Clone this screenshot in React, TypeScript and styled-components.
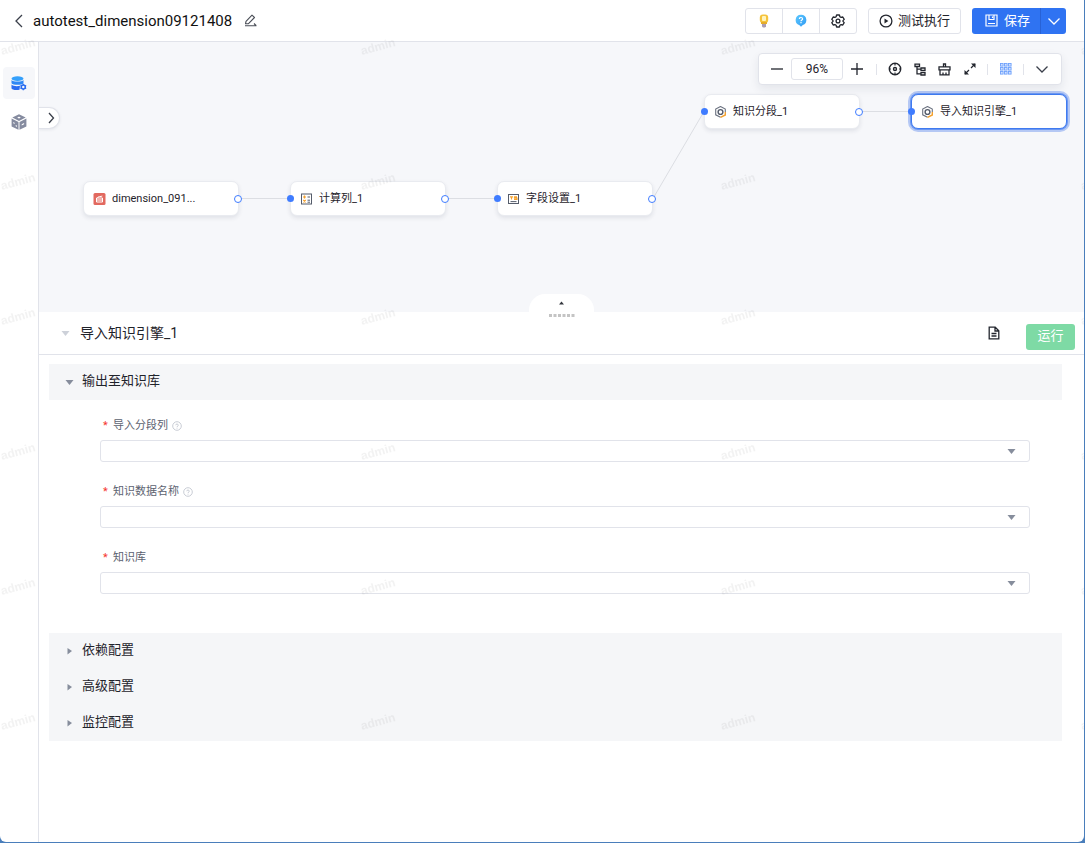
import React from "react";
import styled, { createGlobalStyle, css } from "styled-components";

const color = {
  text: "#1f232b",
  label: "#5c6270",
  line: "#e1e3ea",
  canvas: "#f6f7fa",
  section: "#f5f6f8",
  primary: "#2f73f2",
  port: "#3f7cff",
  muted: "#868d9c",
  frame: "#4a7ebb",
};

const GlobalStyle = createGlobalStyle`
  *, *::before, *::after { box-sizing: border-box; }
  body {
    margin: 0;
    background: ${color.frame};
    color: ${color.text};
    font-family: Roboto, "Noto Sans CJK SC", sans-serif;
    font-size: 13px;
    line-height: 18px;
  }
  button, input, select { font: inherit; color: inherit; margin: 0; }
  h1, h2 { margin: 0; font-weight: 400; }
  svg { display: block; flex: none; }
`;

const Page = styled.div`
  position: relative;
  display: flex;
  flex-direction: column;
  min-height: 100vh;
  border-right: 1px solid ${color.frame};
  border-bottom: 1px solid ${color.frame};
`;

const Surface = styled.div`
  flex: 1;
  display: flex;
  flex-direction: column;
  overflow: hidden;
  background: #fff;
  border-radius: 0 0 6px 6px;
`;

const Watermark = styled.svg`
  position: absolute;
  inset: 0;
  width: 100%;
  height: 100%;
  pointer-events: none;
`;

const Header = styled.header`
  display: flex;
  align-items: center;
  height: 42px;
  padding: 0 18px 0 12px;
  border-bottom: 1px solid ${color.line};
`;

const Title = styled.h1`
  margin: 0 12px 0 7px;
  font-size: 15px;
  line-height: 20px;
  color: #111;
`;

const BareButton = styled.button`
  display: flex;
  align-items: center;
  justify-content: center;
  padding: 0;
  border: 0;
  background: none;
  cursor: pointer;
`;

const HeaderActions = styled.div`
  display: flex;
  gap: 11px;
  margin-left: auto;
`;

const ButtonGroup = styled.div`
  display: flex;
  width: 112px;
  height: 26px;
  border: 1px solid ${color.line};
  border-radius: 3px;
`;

const GroupButton = styled(BareButton)`
  flex: 1;
  & + & { border-left: 1px solid ${color.line}; }
`;

const TestButton = styled(BareButton)`
  gap: 5px;
  height: 26px;
  padding: 0 10px;
  border: 1px solid ${color.line};
  border-radius: 3px;
`;

const SaveGroup = styled.div`
  display: flex;
  height: 26px;
  border-radius: 3px;
  overflow: hidden;
  background: ${color.primary};
  color: #fff;
`;

const SaveButton = styled(BareButton)`
  gap: 6px;
  width: 68px;
  padding-left: 3px;
`;

const SaveMenuButton = styled(BareButton)`
  width: 26px;
  border-left: 1px solid #2862d6;
`;

const Body = styled.div`
  flex: 1;
  display: flex;
`;

const Sidebar = styled.nav`
  display: flex;
  flex-direction: column;
  align-items: center;
  gap: 7px;
  width: 39px;
  padding-top: 25px;
  border-right: 1px solid ${color.line};
`;

const SideButton = styled(BareButton)<{ $active?: boolean }>`
  width: 32px;
  height: 32px;
  border-radius: 4px;
  background: ${(p) => (p.$active ? color.canvas : "none")};
`;

const Main = styled.main`
  flex: 1;
  min-width: 0;
  display: flex;
  flex-direction: column;
`;

const Canvas = styled.section`
  position: relative;
  height: 270px;
  overflow: hidden;
  background: ${color.canvas};
`;

const Edges = styled.svg`
  position: absolute;
  inset: 0;
  width: 100%;
  height: 100%;
`;

const Expander = styled(BareButton)`
  position: absolute;
  left: 0;
  top: 65px;
  width: 21px;
  height: 22px;
  padding-left: 4px;
  border: 1px solid ${color.line};
  border-left: 0;
  border-radius: 0 11px 11px 0;
  background: #fff;
  box-shadow: 0 1px 3px rgba(30, 40, 70, 0.08);
`;

const Toolbar = styled.div`
  position: absolute;
  top: 11px;
  right: 22px;
  display: flex;
  align-items: center;
  height: 32px;
  padding: 0 7px 0 4px;
  border: 1px solid ${color.line};
  border-radius: 4px;
  background: #fff;
  box-shadow: 0 4px 10px rgba(30, 40, 70, 0.08);
`;

const ToolButton = styled(BareButton)<{ $wide?: boolean }>`
  width: ${(p) => (p.$wide ? 28 : 25)}px;
  height: 24px;
`;

const ZoomInput = styled.input`
  width: 52px;
  height: 22px;
  padding: 0;
  border: 1px solid ${color.line};
  border-radius: 3px;
  text-align: center;
  font-size: 12px;
`;

const Divider = styled.span`
  width: 1px;
  height: 11px;
  margin: 0 5px;
  background: ${color.line};
`;

const NodeCard = styled.div<{ $x: number; $y: number; $selected?: boolean }>`
  position: absolute;
  left: ${(p) => p.$x}px;
  top: ${(p) => p.$y}px;
  display: flex;
  align-items: center;
  gap: 6px;
  width: 156px;
  height: 35px;
  padding-left: 9px;
  border: 1px solid #e9ebf0;
  border-radius: 7px;
  background: #fff;
  box-shadow: 0 2px 4px rgba(30, 40, 70, 0.1);
  font-size: 11px;
  line-height: 16px;
  white-space: nowrap;
  ${(p) =>
    p.$selected &&
    css`
      border-color: #3f7af0;
      box-shadow: 0 0 0 1px #6c98f2, 0 0 0 3px #b5c8f4;
    `}
`;

const Port = styled.span<{ $side: "in" | "out" }>`
  position: absolute;
  top: 13px;
  width: 8px;
  height: 8px;
  border-radius: 50%;
  ${(p) =>
    p.$side === "in"
      ? css`
          left: -4px;
          width: 7px;
          height: 7px;
          background: ${color.port};
        `
      : css`
          right: -4px;
          border: 1px solid ${color.port};
          background: #fff;
        `}
`;

const CollapseTab = styled(BareButton)`
  position: absolute;
  left: calc(50% - 33px);
  bottom: 0;
  width: 65px;
  height: 18px;
  border-radius: 16px 16px 0 0;
  background: #fff;
`;

const Grip = styled.svg`
  position: absolute;
  left: calc(50% - 13px);
  top: 272px;
`;

const MainStack = styled.div`
  position: relative;
`;

const PanelHeader = styled.div`
  display: flex;
  align-items: center;
  height: 43px;
  padding: 0 9px 0 22px;
  border-bottom: 1px solid ${color.line};
`;

const PanelTitle = styled.h2`
  margin-left: 10px;
  font-size: 14px;
  line-height: 20px;
`;

const PanelActions = styled.div`
  display: flex;
  align-items: center;
  gap: 26px;
  margin-left: auto;
`;

const RunButton = styled(BareButton)`
  width: 49px;
  height: 26px;
  margin-top: 7px;
  padding-bottom: 2px;
  border-radius: 3px;
  background: #7edaa5;
  color: #fff;
`;

const Settings = styled.div`
  padding: 9px 22px 0 10px;
`;

const SectionButton = styled.button`
  display: flex;
  align-items: center;
  gap: 8px;
  width: 100%;
  height: 36px;
  padding: 0 16px 2px;
  border: 0;
  background: ${color.section};
  text-align: left;
  cursor: pointer;
  & > svg { margin-top: 2px; }
`;

const Form = styled.form`
  display: flex;
  flex-direction: column;
  gap: 20px;
  padding: 16px 32px 39px 51px;
`;

const Field = styled.div`
  display: flex;
  flex-direction: column;
  gap: 4px;
`;

const FieldLabel = styled.label`
  display: flex;
  align-items: center;
  gap: 4px;
  height: 20px;
  padding-left: 3px;
  font-size: 11px;
  line-height: 20px;
  color: ${color.label};
`;

const Required = styled.span`
  width: 6px;
  color: #f5352f;
`;

const SelectBox = styled.div`
  display: grid;
  align-items: center;
  & > * { grid-area: 1 / 1; }
  & > svg { justify-self: end; margin-right: 14px; pointer-events: none; }
`;

const Select = styled.select`
  appearance: none;
  width: 100%;
  height: 22px;
  padding: 0 28px 0 8px;
  border: 1px solid ${color.line};
  border-radius: 3px;
  background: #fff;
  font-size: 11px;
`;

const Chevron = ({ dir, size = 14, stroke = "#3a3f4a" }: { dir: "left" | "right" | "down"; size?: number; stroke?: string }) => {
  const d = { left: "M10 1 4 7l6 6", right: "M5 2 9.500 7 5 12", down: "M1.500 4.500 7 10l5.500-5.500" }[dir];
  return (
    <svg width={size} height={size} viewBox="0 0 14 14" fill="none" stroke={stroke} strokeWidth="1.3">
      <path d={d} />
    </svg>
  );
};

const Caret = ({ dir, fill = color.muted }: { dir: "up" | "right" | "down"; fill?: string }) => {
  const d = { up: "M1.500 5.500 4 2.500l2.500 3z", right: "M2 1 6.500 4 2 7.500z", down: "M0 2h8L4 7z" }[dir];
  return (
    <svg width="9" height="8" viewBox="0 0 8 8" fill={fill}>
      <path d={d} />
    </svg>
  );
};

const PencilIcon = () => (
  <svg width="13" height="13" viewBox="0 0 13 13" fill="none" stroke="#4a4e57" strokeWidth="1.100">
    <path d="M1.500 9.800 2 7.300 8 1.200l2.500 2.300L4.500 9.600z" strokeLinejoin="round" />
    <path d="M1 11.700h11.500M10 9.500l2 2" />
  </svg>
);

const BulbIcon = () => (
  <svg width="12" height="14" viewBox="0 0 12 14">
    <rect x="1.800" y=".5" width="8.400" height="8.500" rx="3" fill="#f5c33c" />
    <rect x="4" y="2" width="4" height="5" rx="1" fill="#fff4bd" />
    <path d="M3 8h6v2H3z" fill="#e5ad2b" />
    <path d="M4 10h4v2.500L7 13.500H5L4 12.500z" fill="#a99cb4" />
  </svg>
);

const HelpBadgeIcon = () => (
  <svg width="12" height="13" viewBox="0 0 12 13">
    <defs>
      <linearGradient id="help" x1="0" y1="0" x2="1" y2="1">
        <stop offset="0" stopColor="#5cc8ff" />
        <stop offset="1" stopColor="#2f9af3" />
      </linearGradient>
    </defs>
    <path d="M6 .8a5.300 5.300 0 0 1 1.500 10.400L6 12.700l-1.500-1.500A5.300 5.300 0 0 1 6 .8z" fill="url(#help)" />
    <path d="M4.400 4.900C4.400 3 7.600 3 7.600 4.900 7.600 6 6 6 6 7.200M6 8.100v1.200" fill="none" stroke="#fff" strokeWidth="1.200" />
  </svg>
);

const GearIcon = () => (
  <svg width="14" height="14" viewBox="0 0 14 14" fill="none" stroke="#23262e" strokeWidth="1.300">
    <path strokeLinejoin="round" d="M5.600 1h2.800l.5 1.700 1.200.7 1.700-.4 1.400 2.400L12 6.600v.8l1.200 1.200-1.400 2.400-1.700-.4-1.200.7-.5 1.700H5.600l-.5-1.700-1.200-.7-1.700.4L.8 8.600 2 7.400v-.8L.8 5.400 2.200 3l1.700.4 1.200-.7z" />
    <circle cx="7" cy="7" r="1.900" />
  </svg>
);

const PlayIcon = () => (
  <svg width="14" height="14" viewBox="0 0 14 14" fill="none" stroke="#23262e" strokeWidth="1.300">
    <circle cx="7" cy="7" r="5.900" />
    <path d="M5.500 4.400 9.400 7 5.500 9.600z" fill="#23262e" stroke="none" />
  </svg>
);

const DiskIcon = () => (
  <svg width="13" height="13" viewBox="0 0 13 13" fill="none" stroke="#fff" strokeWidth="1.200">
    <path d="M1 1h11v11H1zM4 1v4.500h5V1M7.500 2.500v1.500M3 9.500h7" />
  </svg>
);

const DatabaseIcon = () => (
  <svg width="16" height="15" viewBox="0 0 16 15">
    <ellipse cx="6.500" cy="2.600" rx="6" ry="2.300" fill="#35a0fb" />
    <path d="M.5 4c1.500 2.100 10.500 2.100 12 0v3.200c-1.500 2.100-10.500 2.100-12 0z" fill="#2f88f5" />
    <path d="M.5 8.500c1.300 1.700 5.500 2 8.500 1.300L8.500 13.800C5 14.500.5 13.800.5 12.300z" fill="#2a6cf0" />
    <circle cx="12.300" cy="11" r="2" fill="none" stroke="#2a6cf0" strokeWidth="1.500" />
    <path d="M12.300 7.700v1.600M12.300 12.700v1.600M9.400 9.400l1.400.8M13.800 11.800l1.400.8M9.400 12.600l1.400-.8M13.800 10.200l1.400-.8" stroke="#2a6cf0" strokeWidth="1.200" />
  </svg>
);

const CubeIcon = () => (
  <svg width="16" height="16" viewBox="0 0 16 16">
    <path d="M8 .3 14.700 3.500 8 6.900 1.300 3.500zM.6 4.500 7.500 8v7.700L.6 12.400zM15.400 4.500 8.500 8v7.700l6.900-3.300z" fill="#858b9f" />
    <ellipse cx="8" cy="3.600" rx="1.500" ry=".8" fill="#fff" />
    <path d="M2.300 8l1.300.7V10l-1.300-.7zM4.700 11l1.200.6v1.300l-1.200-.6zM10.700 10.200l2.400-1.200v1.300l-2.400 1.200z" fill="#fff" />
  </svg>
);

const TargetIcon = () => (
  <svg width="14" height="14" viewBox="0 0 14 14" fill="none" stroke="#23262e" strokeWidth="1.400">
    <circle cx="7" cy="7" r="5.700" />
    <circle cx="7" cy="7" r="1.500" />
    <path d="M7 1v2.500M7 10.500V13M1 7h2M11 7h2" strokeWidth="1.200" />
  </svg>
);

const TreeIcon = () => (
  <svg width="12" height="13" viewBox="0 0 12 13" fill="none" stroke="#23262e" strokeWidth="1.300">
    <path d="M1 1.200h4.500v2.300H1zM7 5h4v2.500H7zM7 9.700h4V12H7zM3 3.500v7.300h4M3 6.200h4" />
  </svg>
);

const BroomIcon = () => (
  <svg width="13" height="13" viewBox="0 0 13 13" fill="none" stroke="#23262e" strokeWidth="1.300">
    <path d="M5.500 3.500V1h2v2.500M1 3.800h11v3H1zM2 6.800v5h9v-5M5 12V9.500M8 12V9.500" />
  </svg>
);

const ExpandIcon = () => (
  <svg width="12" height="12" viewBox="0 0 12 12" fill="none" stroke="#23262e" strokeWidth="1.200">
    <path d="M7 5 11 1M5 7 1 11" />
    <path d="M7 .5h4.500V5zM.5 7v4.500H5z" fill="#23262e" stroke="none" />
  </svg>
);

const GridIcon = () => (
  <svg width="12" height="12" viewBox="0 0 12 12" fill="#d3e2ff" stroke="#6fa2fc" strokeWidth=".9">
    {[1, 5, 9].map((y) => [1, 5, 9].map((x) => <rect key={`${x}-${y}`} x={x - 0.500} y={y - 0.500} width="2.600" height="2.600" />))}
  </svg>
);

const DocIcon = () => (
  <svg width="12" height="14" viewBox="0 0 12 14" fill="none" stroke="#23262e" strokeWidth="1.300">
    <path d="M1.200 1.200h6l3.600 3.600v8H1.200zM7 1.200V5h3.800M3.500 7.500h5M3.500 10h5" />
  </svg>
);

const HintIcon = () => (
  <svg width="10" height="10" viewBox="0 0 10 10" fill="none" stroke="#c3c7d0" strokeWidth=".9">
    <circle cx="5" cy="5" r="4.300" />
    <path d="M3.700 4.200c0-1.600 2.600-1.600 2.600 0C6.300 5 5 5 5 6M5 6.700v.9" />
  </svg>
);

type NodeKind = "source" | "calc" | "fields" | "hex";

const NodeIcon = ({ kind }: { kind: NodeKind }) => {
  switch (kind) {
    case "source":
      return (
        <svg width="13" height="12" viewBox="0 0 13 12">
          <rect x=".5" width="12" height="12" rx="1.500" fill="#e2695f" />
          <path d="M3.500 5h6v4h-6zM4.500 5C5 2.800 8 4 9.300 3M4 7h5" fill="none" stroke="#fff" strokeWidth="1" />
        </svg>
      );
    case "calc":
      return (
        <svg width="13" height="12" viewBox="0 0 13 12" fill="none">
          <rect x="1.500" y="1" width="10" height="10" fill="#fff" stroke="#555c6b" />
          <path d="M3 4h3M4.500 2.500v3M3.300 7l2.400 2.400M5.700 7 3.300 9.400" stroke="#f4a12d" strokeWidth="1.200" />
          <path d="M7.500 4H10M7.500 7.200H10M7.500 9.200H10" stroke="#555c6b" />
        </svg>
      );
    case "fields":
      return (
        <svg width="13" height="12" viewBox="0 0 13 12" fill="none">
          <rect x="1.500" y="1.500" width="10" height="9" fill="#fff" stroke="#555c6b" />
          <path d="M3 3.800h3M4.500 3.800v2.700M10 3.800H7.500v1.300H10v1.400H7" stroke="#f4a12d" strokeWidth="1.200" />
          <path d="M3.500 8.600h6" stroke="#555c6b" />
        </svg>
      );
    default:
      return (
        <svg width="13" height="12" viewBox="0 0 13 12" fill="none" strokeWidth="1.100">
          <path d="M6.500 .6 11.300 3v3M6.500 .6 1.700 3v5.800l4.800 2.500" stroke="#6b7280" />
          <path d="M11.300 6v3L6.500 11.400" stroke="#f4a12d" strokeWidth="1.400" />
          <circle cx="6.500" cy="6" r="2.400" stroke="#555c6b" strokeWidth="1.400" />
        </svg>
      );
  }
};

interface FlowNode {
  label: string;
  kind: NodeKind;
  x: number;
  y: number;
  selected?: boolean;
}

const nodes: FlowNode[] = [
  { label: "dimension_091...", kind: "source", x: 44, y: 139 },
  { label: "计算列_1", kind: "calc", x: 251, y: 139 },
  { label: "字段设置_1", kind: "fields", x: 458, y: 139 },
  { label: "知识分段_1", kind: "hex", x: 665, y: 52 },
  { label: "导入知识引擎_1", kind: "hex", x: 872, y: 52, selected: true },
];

const fields = [
  { id: "segment", label: "导入分段列", hint: true },
  { id: "dataName", label: "知识数据名称", hint: true },
  { id: "library", label: "知识库", hint: false },
];

const closedSections = ["依赖配置", "高级配置", "监控配置"];

export default function App() {
  return (
    <Page>
      <GlobalStyle />
      <Surface>
        <Header>
          <BareButton aria-label="返回">
            <Chevron dir="left" />
          </BareButton>
          <Title>autotest_dimension09121408</Title>
          <BareButton aria-label="重命名">
            <PencilIcon />
          </BareButton>
          <HeaderActions>
            <ButtonGroup>
              <GroupButton aria-label="提示"><BulbIcon /></GroupButton>
              <GroupButton aria-label="帮助"><HelpBadgeIcon /></GroupButton>
              <GroupButton aria-label="设置"><GearIcon /></GroupButton>
            </ButtonGroup>
            <TestButton><PlayIcon />测试执行</TestButton>
            <SaveGroup>
              <SaveButton><DiskIcon />保存</SaveButton>
              <SaveMenuButton aria-label="更多保存选项">
                <Chevron dir="down" stroke="#fff" />
              </SaveMenuButton>
            </SaveGroup>
          </HeaderActions>
        </Header>
        <Body>
          <Sidebar>
            <SideButton $active aria-label="数据"><DatabaseIcon /></SideButton>
            <SideButton aria-label="模型"><CubeIcon /></SideButton>
          </Sidebar>
          <Main>
            <MainStack>
              <Canvas>
                <Edges fill="none" stroke="#dcdee3">
                  {nodes.slice(1).map((to, i) => {
                    const from = nodes[i];
                    return <path key={to.label} d={`M${from.x + 156} ${from.y + 17.5}L${to.x} ${to.y + 17.5}`} />;
                  })}
                </Edges>
                {nodes.map((n, i) => (
                  <NodeCard key={n.label} $x={n.x} $y={n.y} $selected={n.selected}>
                    {i > 0 && <Port $side="in" />}
                    <NodeIcon kind={n.kind} />
                    {n.label}
                    {i < nodes.length - 1 && <Port $side="out" />}
                  </NodeCard>
                ))}
                <Expander aria-label="展开">
                  <Chevron dir="right" />
                </Expander>
                <Toolbar>
                  <ToolButton aria-label="缩小" $wide>
                    <svg width="12" height="12" stroke="#23262e" strokeWidth="1.300"><path d="M0 6h12" /></svg>
                  </ToolButton>
                  <ZoomInput aria-label="缩放比例" defaultValue="96%" />
                  <ToolButton aria-label="放大" $wide>
                    <svg width="12" height="12" stroke="#23262e" strokeWidth="1.300"><path d="M0 6h12M6 0v12" /></svg>
                  </ToolButton>
                  <Divider />
                  <ToolButton aria-label="定位"><TargetIcon /></ToolButton>
                  <ToolButton aria-label="布局"><TreeIcon /></ToolButton>
                  <ToolButton aria-label="清理"><BroomIcon /></ToolButton>
                  <ToolButton aria-label="全屏"><ExpandIcon /></ToolButton>
                  <Divider />
                  <ToolButton aria-label="网格"><GridIcon /></ToolButton>
                  <Divider />
                  <ToolButton aria-label="更多"><Chevron dir="down" /></ToolButton>
                </Toolbar>
                <CollapseTab aria-label="收起画布">
                  <Caret dir="up" fill="#33363d" />
                </CollapseTab>
              </Canvas>
              <Grip width="26" height="4" fill="#c4c4c4">
                {[0, 1, 2, 3, 4, 5].map((i) => (
                  <rect key={i} x={i * 4.500} width="3" height="3" />
                ))}
              </Grip>
            </MainStack>
            <PanelHeader>
              <Caret dir="down" fill="#cdd1d9" />
              <PanelTitle>导入知识引擎_1</PanelTitle>
              <PanelActions>
                <BareButton aria-label="文档"><DocIcon /></BareButton>
                <RunButton>运行</RunButton>
              </PanelActions>
            </PanelHeader>
            <Settings>
              <SectionButton aria-expanded="true">
                <Caret dir="down" />
                输出至知识库
              </SectionButton>
              <Form>
                {fields.map((f) => (
                  <Field key={f.id}>
                    <FieldLabel htmlFor={f.id}>
                      <Required>*</Required>
                      {f.label}
                      {f.hint && <HintIcon />}
                    </FieldLabel>
                    <SelectBox>
                      <Select id={f.id} />
                      <Caret dir="down" />
                    </SelectBox>
                  </Field>
                ))}
              </Form>
              {closedSections.map((name) => (
                <SectionButton key={name} aria-expanded="false">
                  <Caret dir="right" />
                  {name}
                </SectionButton>
              ))}
            </Settings>
          </Main>
        </Body>
      </Surface>
      <Watermark aria-hidden="true">
        <defs>
          <pattern id="mark" width="360" height="135" patternUnits="userSpaceOnUse">
            <text x="2" y="55" transform="rotate(-15 2 55)" fontSize="12" fontWeight="700" fontFamily="Liberation Sans, sans-serif" fill="#000" fillOpacity=".05">
              admin
            </text>
          </pattern>
        </defs>
        <rect width="100%" height="100%" fill="url(#mark)" />
      </Watermark>
    </Page>
  );
}
